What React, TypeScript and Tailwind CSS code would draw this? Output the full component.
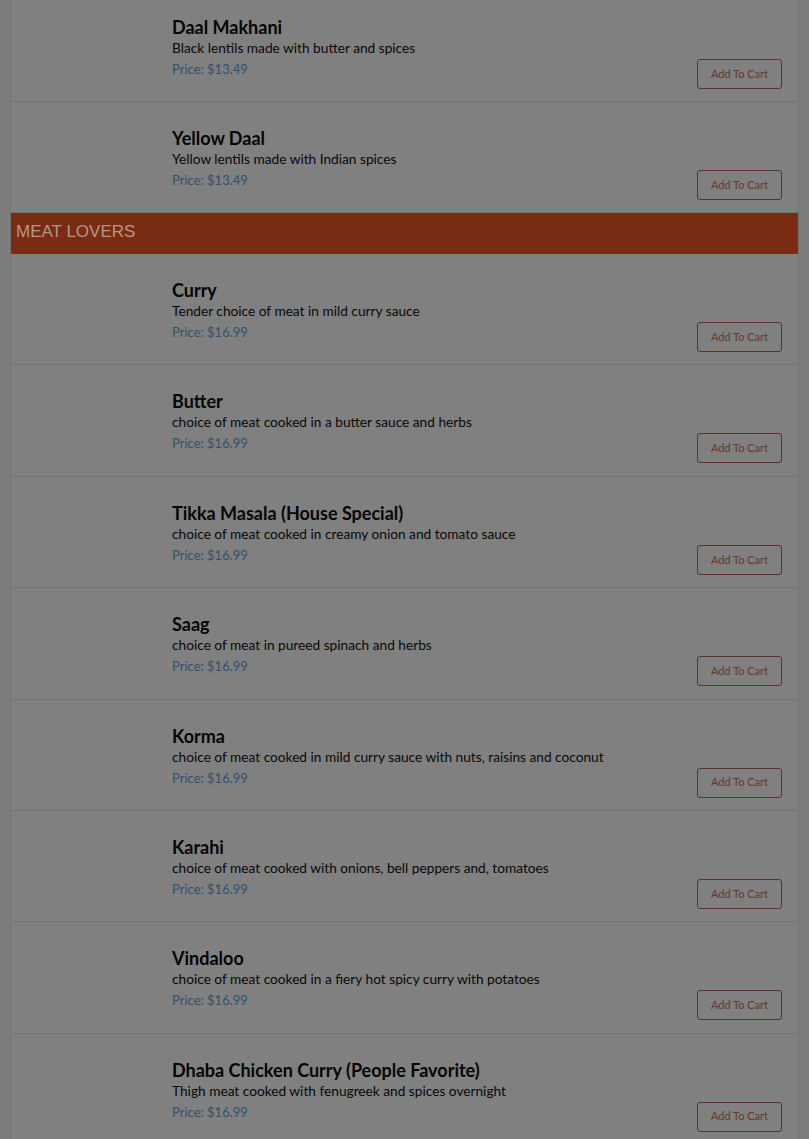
import React from "react";

type Item = { name: string; desc: string; price: string };

const veg: Item[] = [
  { name: "Daal Makhani", desc: "Black lentils made with butter and spices", price: "$13.49" },
  { name: "Yellow Daal", desc: "Yellow lentils made with Indian spices", price: "$13.49" },
];

const meat: Item[] = [
  { name: "Curry", desc: "Tender choice of meat in mild curry sauce", price: "$16.99" },
  { name: "Butter", desc: "choice of meat cooked in a butter sauce and herbs", price: "$16.99" },
  { name: "Tikka Masala (House Special)", desc: "choice of meat cooked in creamy onion and tomato sauce", price: "$16.99" },
  { name: "Saag", desc: "choice of meat in pureed spinach and herbs", price: "$16.99" },
  { name: "Korma", desc: "choice of meat cooked in mild curry sauce with nuts, raisins and coconut", price: "$16.99" },
  { name: "Karahi", desc: "choice of meat cooked with onions, bell peppers and, tomatoes", price: "$16.99" },
  { name: "Vindaloo", desc: "choice of meat cooked in a fiery hot spicy curry with potatoes", price: "$16.99" },
  { name: "Dhaba Chicken Curry (People Favorite)", desc: "Thigh meat cooked with fenugreek and spices overnight", price: "$16.99" },
];

function Row({ item, tall }: { item: Item; tall?: boolean }) {
  return (
    <div className={`flex border-b border-[#747474] pt-[25px] ${tall ? "h-[111.4px]" : "h-[111px]"}`}>
      <div className="w-[161px] shrink-0" />
      <div className="flex-1 min-w-0">
        <div className="text-[18px] leading-[22px] font-bold text-[#050505]">{item.name}</div>
        <div className="text-[13.7px] leading-[20px] text-[#080808]">{item.desc}</div>
        <div className="text-[13px] leading-[22px] text-[#34506a]">Price: {item.price}</div>
      </div>
      <div className="pt-[43px] pr-[16px]">
        <button className="h-[30px] w-[85px] rounded-[3px] border border-[#5a322e] text-[11px] text-[#643632] bg-transparent">
          Add To Cart
        </button>
      </div>
    </div>
  );
}

export default function App() {
  return (
    <div
      className="min-h-[1139px] bg-[#7c7c7c] overflow-hidden"
      style={{ fontFamily: "Lato, 'Noto Sans', sans-serif" }}
    >
      <div className="ml-[10px] w-[789px] border-x border-[#737373] bg-[#808080] -mt-[9px]">
        {veg.map((it) => (
          <Row key={it.name} item={it} />
        ))}
        <div
          className="h-[41px] bg-[#7a2c12] flex items-center pl-[5px] pb-[4px] text-[17px] text-[#b3978d]"
          style={{ fontFamily: "'Liberation Sans', Arial, sans-serif" }}
        >
          MEAT LOVERS
        </div>
        {meat.map((it) => (
          <Row key={it.name} item={it} tall />
        ))}
      </div>
    </div>
  );
}
